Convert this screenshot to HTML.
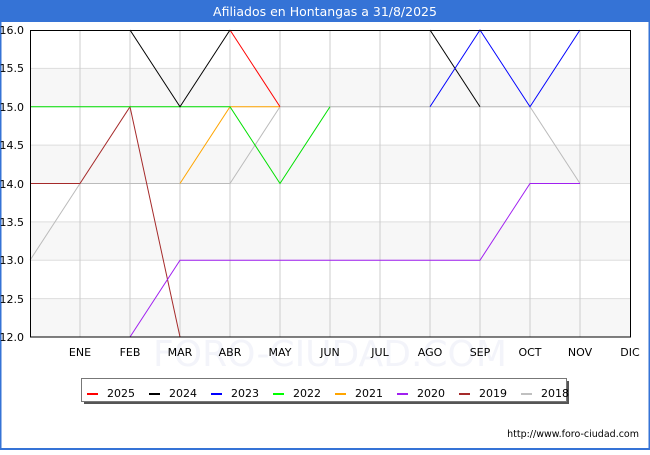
<!DOCTYPE html>
<html><head><meta charset="utf-8"><style>
body{margin:0;width:650px;height:450px;overflow:hidden;background:#fff;font-family:"Liberation Sans","DejaVu Sans",sans-serif}
</style></head><body>
<svg width="650" height="450" xmlns="http://www.w3.org/2000/svg" font-family="DejaVu Sans, Liberation Sans, sans-serif">
<rect x="0" y="0" width="650" height="450" fill="#fff"/>
<rect x="0" y="0" width="650" height="22" fill="#3573d6"/>
<rect x="0" y="0" width="1.5" height="450" fill="#3573d6"/>
<rect x="648.5" y="0" width="1.5" height="450" fill="#3573d6"/>
<rect x="0" y="448" width="650" height="2" fill="#3573d6"/>
<text x="325" y="16" fill="#fff" font-size="12.5" text-anchor="middle">Afiliados en Hontangas a 31/8/2025</text>
<g fill="#f7f7f7">
<rect x="30" y="68.4" width="600" height="38.4"/>
<rect x="30" y="145.1" width="600" height="38.4"/>
<rect x="30" y="221.9" width="600" height="38.4"/>
<rect x="30" y="298.6" width="600" height="38.4"/>
</g>
<g stroke="#ddd" stroke-width="1">
<line x1="30" y1="68.4" x2="630" y2="68.4"/><line x1="30" y1="106.75" x2="630" y2="106.75"/>
<line x1="30" y1="145.1" x2="630" y2="145.1"/><line x1="30" y1="183.5" x2="630" y2="183.5"/>
<line x1="30" y1="221.9" x2="630" y2="221.9"/><line x1="30" y1="260.25" x2="630" y2="260.25"/>
<line x1="30" y1="298.6" x2="630" y2="298.6"/>
</g>
<g stroke="#ccc" stroke-width="1">
<line x1="80" y1="30" x2="80" y2="337"/><line x1="130" y1="30" x2="130" y2="337"/><line x1="180" y1="30" x2="180" y2="337"/><line x1="230" y1="30" x2="230" y2="337"/><line x1="280" y1="30" x2="280" y2="337"/><line x1="330" y1="30" x2="330" y2="337"/><line x1="380" y1="30" x2="380" y2="337"/><line x1="430" y1="30" x2="430" y2="337"/><line x1="480" y1="30" x2="480" y2="337"/><line x1="530" y1="30" x2="530" y2="337"/><line x1="580" y1="30" x2="580" y2="337"/>
</g>
<text x="330" y="366" fill="#f3f4fa" font-size="36" text-anchor="middle">FORO-CIUDAD.COM</text>
<g fill="none" stroke-width="1">
<polyline stroke="#bbb" points="30,260.25 80,183.5 230,183.5 280,106.75 530,106.75 580,183.5"/>
<polyline stroke="#a52a2a" points="30,183.5 80,183.5 130,106.75 180,337"/>
<polyline stroke="#a020f0" points="130,337 180,260.25 480,260.25 530,183.5 580,183.5"/>
<polyline stroke="#ffa500" points="180,183.5 230,106.75 280,106.75"/>
<polyline stroke="#00e000" points="30,106.75 230,106.75 280,183.5 330,106.75"/>
<polyline stroke="#000" points="130,30 180,106.75 230,30"/>
<polyline stroke="#000" points="430,30 480,106.75"/>
<polyline stroke="#0000ff" points="430,106.75 480,30 530,106.75 580,30"/>
<polyline stroke="#ff0000" points="230,30 280,106.75"/>
</g>
<rect x="30.5" y="30.5" width="600" height="306.5" fill="none" stroke="#000" stroke-width="1"/>
<g font-size="11" fill="#000" text-anchor="end">
<text x="24" y="34">16.0</text><text x="24" y="72">15.5</text><text x="24" y="111">15.0</text><text x="24" y="149">14.5</text><text x="24" y="188">14.0</text><text x="24" y="226">13.5</text><text x="24" y="264">13.0</text><text x="24" y="303">12.5</text><text x="24" y="341">12.0</text>
</g>
<g font-size="11" fill="#000" text-anchor="middle">
<text x="80" y="356">ENE</text><text x="130" y="356">FEB</text><text x="180" y="356">MAR</text><text x="230" y="356">ABR</text><text x="280" y="356">MAY</text><text x="330" y="356">JUN</text><text x="380" y="356">JUL</text><text x="430" y="356">AGO</text><text x="480" y="356">SEP</text><text x="530" y="356">OCT</text><text x="580" y="356">NOV</text><text x="630" y="356">DIC</text>
</g>
<rect x="84" y="381" width="485" height="23" fill="#555"/>
<rect x="81.5" y="378.5" width="485" height="23" fill="#fff" stroke="#777"/>
<g font-size="11" fill="#000">
<rect x="87" y="393" width="11" height="2" fill="#f00"/><text x="107" y="397">2025</text>
<rect x="149" y="393" width="11" height="2" fill="#000"/><text x="169" y="397">2024</text>
<rect x="211" y="393" width="11" height="2" fill="#00f"/><text x="231" y="397">2023</text>
<rect x="273" y="393" width="11" height="2" fill="#0f0"/><text x="293" y="397">2022</text>
<rect x="335" y="393" width="11" height="2" fill="#ffa500"/><text x="355" y="397">2021</text>
<rect x="397" y="393" width="11" height="2" fill="#a020f0"/><text x="417" y="397">2020</text>
<rect x="459" y="393" width="11" height="2" fill="#a52a2a"/><text x="479" y="397">2019</text>
<rect x="521" y="393" width="11" height="2" fill="#c0c0c0"/><text x="541" y="397">2018</text>
</g>
<text x="639" y="437" font-size="9.5" fill="#000" text-anchor="end">http://www.foro-ciudad.com</text>
</svg>
</body></html>
